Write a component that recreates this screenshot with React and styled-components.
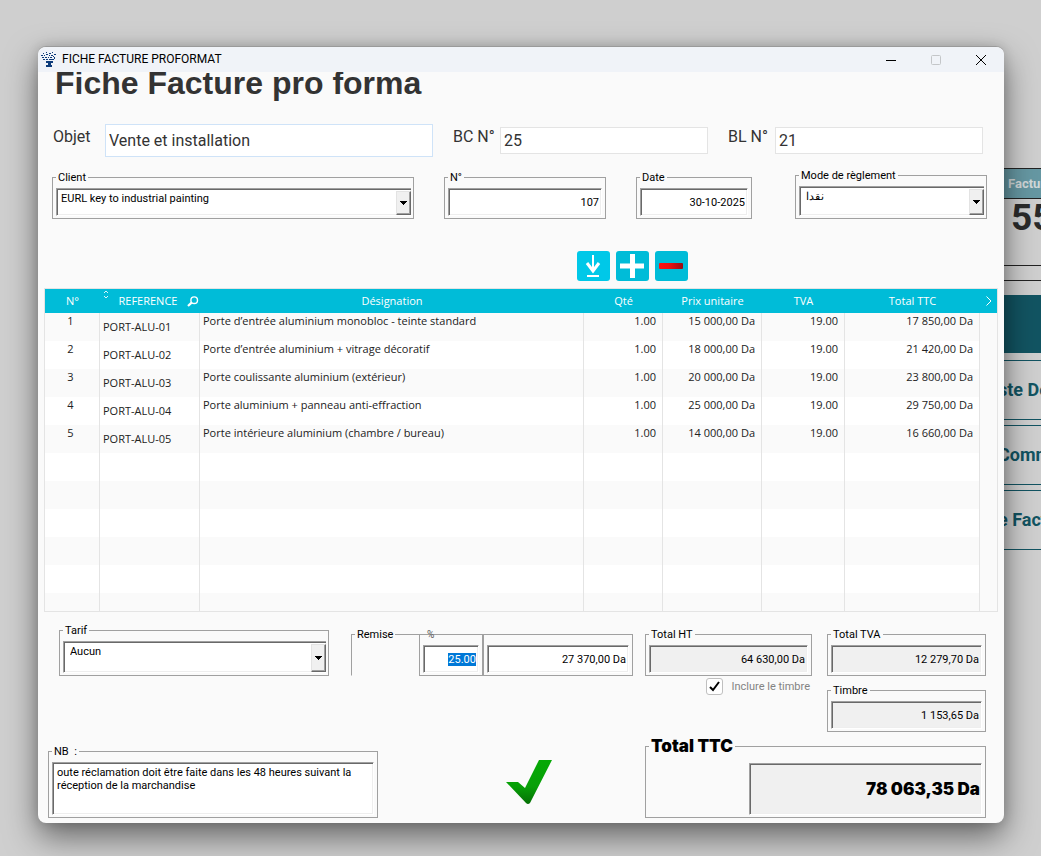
import React, { Component } from 'react';
import styled, { createGlobalStyle, ThemeProvider } from 'styled-components';

const theme = {
  surface: '#fafafa',
  accent: '#00bcd8',
  teal: '#125462',
  groove: '#a0a0a0',
  gridLine: '#e4e4e4',
  ui: 'Roboto, Arial, sans-serif',
  table: '"Open Sans", sans-serif',
};

const GlobalStyle = createGlobalStyle`
  * {
    box-sizing: border-box;
  }
  body {
    margin: 0;
    background: #cfcfcf;
  }
  button, input, select, textarea {
    border: 0;
    border-radius: 0;
    color: inherit;
    font: inherit;
    margin: 0;
    outline: none;
    padding: 0;
  }
`;

const Desktop = styled.div`
  align-items: flex-start;
  display: flex;
  font-family: ${props => props.theme.ui};
  font-size: 11px;
  line-height: 13px;
  min-height: 100vh;
  overflow: hidden;
  padding: 46px 0 32px 38px;
`;

const Window = styled.main`
  background: ${props => props.theme.surface};
  border-top: 1px solid #9a9a9a;
  border-radius: 8px;
  box-shadow: 0 14px 32px rgba(0, 0, 0, 0.5), 0 0 12px rgba(0, 0, 0, 0.15);
  color: #000;
  flex: 1;
  min-width: 0;
  overflow: hidden;
  padding: 0 1px 1px;
  position: relative;
  z-index: 1;
`;

const TitleBar = styled.header`
  align-items: center;
  background: #f0f3f8;
  display: flex;
  font-size: 12px;
  gap: 6px;
  height: 25px;
  margin: 0 -1px;
  padding: 0 1px 0 3px;
`;

const WindowTitle = styled.span`
  flex: 1;
`;

const WindowButtons = styled.div`
  display: flex;
`;

const WindowButton = styled.button`
  align-items: center;
  background: none;
  color: ${props => (props.disabled ? '#c4c6c9' : '#000')};
  display: flex;
  height: 25px;
  justify-content: center;
  width: 45px;
`;

const Body = styled.form`
  overflow: hidden;
`;

const Heading = styled.h1`
  color: #333;
  font-family: "Liberation Sans", Arial, sans-serif;
  font-size: 32px;
  line-height: 32px;
  margin: -5px 0 25px 16px;
`;

const HeadRow = styled.div`
  color: #333;
  display: flex;
  font-size: 16px;
  gap: 20px;
  padding: 0 20px 0 14px;
`;

const HeadField = styled.label`
  align-items: center;
  display: flex;
  flex: ${props => props.$grow} 1 0;
  height: 33px;
  min-width: 0;
`;

const HeadLabel = styled.span`
  align-self: flex-start;
  flex: none;
  line-height: 26px;
  width: ${props => props.$width};
`;

const HeadInput = styled.input`
  background: #fff;
  border: 1px solid ${props => (props.$tall ? '#cfe3f8' : '#e4e4e4')};
  flex: 1;
  height: ${props => (props.$tall ? '33px' : '27px')};
  min-width: 0;
  padding: 0 3px;
`;

const GroupRow = styled.div`
  align-items: flex-end;
  display: flex;
  gap: 43px;
  margin-top: 12px;
  padding: 0 16px 0 13px;
`;

const GroupSet = styled.div`
  display: flex;
  flex: 700 1 700px;
  gap: 30px;
`;

const Group = styled.fieldset`
  border: 1px solid ${props => props.theme.groove};
  flex: ${props => (props.$grow ? `${props.$grow} 1 ${props.$grow}px` : 'none')};
  margin: 0;
  min-width: 0;
  padding: 4px 3px 2px;
`;

const Legend = styled.legend`
  padding: 0 2px;
`;

const Bare = styled(Group)`
  padding-top: 10px;
  position: relative;
`;

const OverLegend = styled.legend`
  color: #555;
  font-size: 10px;
  left: 5px;
  position: absolute;
  top: -7px;
`;

const sunken = `
  border: 1px solid;
  border-color: #a0a0a0 #fff #fff #a0a0a0;
  box-shadow: inset 1px 1px 0 #696969, inset -1px -1px 0 #eee;
`;

const Sunken = styled.input`
  ${sunken}
  background: ${props => (props.readOnly ? '#f0f0f0' : '#fff')};
  display: block;
  height: 28px;
  padding: 0 2px;
  text-align: right;
  width: 100%;
  &::selection {
    background: #0078d7;
    color: #fff;
  }
`;

const ComboFrame = styled.div`
  ${sunken}
  background: #fff;
  border-right: 0;
  display: flex;
  height: ${props => props.$height || '28px'};
  margin-right: -1px;
  padding: 2px 0 0 1px;
`;

const ComboSelect = styled.select`
  appearance: none;
  background: none;
  flex: 1;
  height: 15px;
  min-width: 0;
  padding-left: ${props => (props.$inset ? '5px' : '3px')};
`;

const ComboArrow = styled.span`
  align-items: center;
  background: #f0f0f0;
  border: 1px solid;
  border-color: #e3e3e3 #696969 #696969 #e3e3e3;
  box-shadow: inset -1px -1px 0 #a0a0a0;
  display: flex;
  justify-content: center;
  pointer-events: none;
  width: 15px;
`;

const Toolbar = styled.div`
  display: flex;
  gap: 6px;
  margin: 32px 0 7px calc(50% + 56px);
`;

const ToolButton = styled.button`
  background: ${props => (props.$bright ? '#00c8e8' : props.theme.accent)};
  border-radius: 3px;
  height: 30px;
  width: 33px;
  svg {
    display: block;
  }
`;

const TableFrame = styled.div`
  border: 1px solid ${props => props.theme.gridLine};
  margin: 0 5px;
`;

const Table = styled.table`
  border-spacing: 0;
  color: #222;
  font-family: ${props => props.theme.table};
  line-height: 16px;
  table-layout: fixed;
  width: 100%;
`;

const HeadCell = styled.th`
  background: ${props => props.theme.accent};
  color: #fff;
  font-weight: normal;
  height: 24px;
  padding: 0;
  width: ${props => props.$width || 'auto'};
  svg {
    display: block;
    margin: 0 auto;
  }
`;

const SortableHead = styled.div`
  align-items: center;
  display: flex;
  height: 24px;
  justify-content: space-between;
  padding: 0 1px 0 3px;
  svg {
    margin: 0;
  }
  svg:first-child {
    align-self: flex-start;
  }
`;

const Row = styled.tr`
  background: #fff;
  height: 28px;
  &:nth-child(odd) {
    background: ${props => props.theme.surface};
  }
  &:last-child {
    height: 18px;
  }
`;

const Cell = styled.td`
  border-right: 1px solid ${props => props.theme.gridLine};
  overflow: hidden;
  padding: ${props => (props.$low ? '6px' : '0')} 6px 0 3px;
  text-align: ${props => props.$align || 'left'};
  vertical-align: top;
  white-space: nowrap;
  &:last-child {
    background: ${props => props.theme.surface};
    border-right: 0;
  }
`;

const Footer = styled.div`
  display: grid;
  gap: 12px;
  grid-template-columns: 585fr 341fr;
  margin-top: 12px;
  padding: 0 17px 4px 9px;
`;

const FooterLeft = styled.div`
  display: flex;
  flex-direction: column;
  justify-content: space-between;
  min-width: 0;
`;

const TariffRow = styled.div`
  align-items: flex-end;
  display: flex;
  gap: 22px;
  padding-left: 11px;
`;

const Discount = styled.div`
  align-items: flex-end;
  display: flex;
  flex: 282 1 282px;
`;

const DiscountLabel = styled(Group)`
  border-bottom-color: transparent;
  border-right: 0;
  height: 48px;
`;

const NoteRow = styled.div`
  align-items: center;
  display: flex;
`;

const Note = styled.textarea`
  ${sunken}
  background: #fff;
  display: block;
  height: 53px;
  padding: 3px 4px;
  resize: none;
  width: 100%;
`;

const Confirm = styled.div`
  display: flex;
  flex: 255 1 255px;
  justify-content: center;
  padding-left: 46px;
`;

const ConfirmButton = styled.button`
  background: none;
  svg {
    display: block;
  }
`;

const FooterRight = styled.div`
  min-width: 0;
  padding-top: 4px;
`;

const Totals = styled.div`
  display: grid;
  gap: 15px;
  grid-template-columns: 167fr 159fr;
  margin-bottom: 6px;
`;

const TotalsColumn = styled.div`
  display: flex;
  flex-direction: column;
  gap: ${props => props.$gap};
  min-width: 0;
`;

const StampOption = styled.label`
  align-items: center;
  color: #838383;
  display: flex;
  gap: 8px;
  justify-content: flex-end;
  padding-right: 2px;
`;

const CheckBox = styled.span`
  background: #fff;
  border: 1px solid #c0c0c0;
  border-radius: 3px;
  display: grid;
  height: 17px;
  width: 17px;
  > * {
    grid-area: 1 / 1;
  }
  input {
    appearance: none;
  }
  svg {
    pointer-events: none;
    visibility: hidden;
  }
  input:checked + svg {
    visibility: visible;
  }
`;

const GrandTotal = styled(Group)`
  font-family: Inter, sans-serif;
  font-size: 17px;
  font-weight: 900;
  line-height: 16px;
  padding-top: 9px;
`;

const GrandInput = styled(Sunken)`
  height: 52px;
  margin-left: auto;
  padding: 0 1px;
  width: 70%;
`;

// page left open behind the window, only its edge shows on the right
const Backdrop = styled.aside`
  color: ${props => props.theme.teal};
  flex: none;
  margin: 122px -63px 0 -60px;
  width: 160px;
`;

const Counter = styled.section`
  border: 1px solid #222;
  height: 98px;
  margin-bottom: 14px;
`;

const CounterTitle = styled.h2`
  background: #6698a3;
  border-bottom: 1px solid #222;
  color: #d2d9da;
  font-size: 13px;
  line-height: 29px;
  margin: 0;
  padding-left: 63px;
`;

const CounterValue = styled.div`
  color: #2a2a2a;
  font-size: 37px;
  font-weight: bold;
  line-height: 38px;
  padding-left: 66px;
`;

const Menu = styled.nav`
  border-top: 1px solid #222;
  display: flex;
  flex-direction: column;
  gap: 5px;
  padding-top: 14px;
`;

const MenuBanner = styled.div`
  background: ${props => props.theme.teal};
  height: 58px;
  margin-bottom: 2px;
`;

const MenuButton = styled.button`
  background: #cfcfcf;
  border: 1px solid ${props => props.theme.teal};
  font-size: 18px;
  font-weight: bold;
  height: 60px;
  padding: 0 0 2px 53px;
  text-align: left;
`;

const AppIcon = () => (
  <svg width="15" height="16" viewBox="0 0 15 16" fill="#0d3b7a" shapeRendering="crispEdges" aria-hidden="true">
    <path d="M2 1h1v1H2zM5 0h1v1H5zM8 1h2v1H8zM11 0h1v1h-1zM13 2h2v1h-2zM0 3h2v1H0zM3 3h1v1H3zM5 2h2v1H5zM8 3h1v1H8zM10 3h2v1h-2zM1 5h2v1H1zM4 5h2v1H4zM7 5h1v1H7zM9 5h2v1H9zM12 4h1v1h-1zM13 5h1v2h-1zM2 7h2v1H2zM5 7h2v1H5zM11 7h2v1h-2z" />
    <path d="M8 7h3v1H8zM5 9h7v2H5zM7 11h3v2H7zM5 13h6v2H5z" />
  </svg>
);

const Caret = () => (
  <svg width="7" height="4" viewBox="0 0 7 4" shapeRendering="crispEdges" aria-hidden="true">
    <path d="M0 0h7v1H6v1H5v1H4v1H3V3H2V2H1V1H0z" />
  </svg>
);

const Search = () => (
  <svg width="12" height="11" viewBox="0 0 12 11" fill="none" stroke="#fff" aria-hidden="true">
    <circle cx="7.2" cy="4.2" r="3.3" strokeWidth="1.4" />
    <path d="M4.6 6.6 1 10" strokeWidth="2.2" />
  </svg>
);

const Sort = () => (
  <svg width="6" height="10" viewBox="0 0 6 10" fill="none" stroke="#d8f6fa" aria-hidden="true">
    <path d="M1 4 3 2l2 2M1 7l2 2 2-2" />
  </svg>
);

const Combo = ({ id, value, inset, height }) => (
  <ComboFrame $height={height}>
    <ComboSelect id={id} defaultValue={value} $inset={inset}>
      <option>{value}</option>
    </ComboSelect>
    <ComboArrow><Caret /></ComboArrow>
  </ComboFrame>
);

const Amount = ({ id, label, value, grow, readOnly }) => (
  <Group $grow={grow}>
    <Legend><label htmlFor={id}>{label}</label></Legend>
    <Sunken id={id} defaultValue={value} readOnly={readOnly} />
  </Group>
);

const lines = [
  { id: 1, reference: 'PORT-ALU-01', name: 'Porte d’entrée aluminium monobloc - teinte standard', price: '15 000,00 Da', total: '17 850,00 Da' },
  { id: 2, reference: 'PORT-ALU-02', name: 'Porte d’entrée aluminium + vitrage décoratif', price: '18 000,00 Da', total: '21 420,00 Da' },
  { id: 3, reference: 'PORT-ALU-03', name: 'Porte coulissante aluminium (extérieur)', price: '20 000,00 Da', total: '23 800,00 Da' },
  { id: 4, reference: 'PORT-ALU-04', name: 'Porte aluminium + panneau anti-effraction', price: '25 000,00 Da', total: '29 750,00 Da' },
  { id: 5, reference: 'PORT-ALU-05', name: 'Porte intérieure aluminium (chambre / bureau)', price: '14 000,00 Da', total: '16 660,00 Da' },
];
const emptyRows = [6, 7, 8, 9, 10, 11];

class InvoiceForm extends Component {
  percent = React.createRef();

  componentDidMount() {
    this.percent.current.focus();
    this.percent.current.select();
  }

  renderTable() {
    return (
      <TableFrame>
        <Table>
          <thead>
            <tr>
              <HeadCell $width="55px">N°</HeadCell>
              <HeadCell $width="100px">
                <SortableHead><Sort />REFERENCE<Search /></SortableHead>
              </HeadCell>
              <HeadCell>Désignation</HeadCell>
              <HeadCell $width="79px">Qté</HeadCell>
              <HeadCell $width="99px">Prix unitaire</HeadCell>
              <HeadCell $width="83px">TVA</HeadCell>
              <HeadCell $width="135px">Total TTC</HeadCell>
              <HeadCell $width="17px">
                <svg width="6" height="10" viewBox="0 0 6 10" fill="none" stroke="#fff" aria-hidden="true">
                  <path d="M.5.5 5 5 .5 9.5" />
                </svg>
              </HeadCell>
            </tr>
          </thead>
          <tbody>
            {lines.map(({ id, reference, name, price, total }) => (
              <Row key={id}>
                <Cell $align="center">{id}</Cell>
                <Cell $low>{reference}</Cell>
                <Cell>{name}</Cell>
                <Cell $align="right">1.00</Cell>
                <Cell $align="right">{price}</Cell>
                <Cell $align="right">19.00</Cell>
                <Cell $align="right">{total}</Cell>
                <Cell />
              </Row>
            ))}
            {emptyRows.map(id => (
              <Row key={id}>
                <Cell /><Cell /><Cell /><Cell /><Cell /><Cell /><Cell /><Cell />
              </Row>
            ))}
          </tbody>
        </Table>
      </TableFrame>
    );
  }

  renderFooter() {
    return (
      <Footer>
        <FooterLeft>
          <TariffRow>
            <Group $grow={270}>
              <Legend><label htmlFor="tarif">Tarif</label></Legend>
              <Combo id="tarif" value="Aucun" inset height="32px" />
            </Group>
            <Discount>
              <DiscountLabel $grow={68}>
                <Legend>Remise</Legend>
              </DiscountLabel>
              <Bare $grow={64}>
                <OverLegend><label htmlFor="percent">%</label></OverLegend>
                <Sunken id="percent" ref={this.percent} defaultValue="25.00" />
              </Bare>
              <Bare $grow={150}>
                <Sunken aria-label="Remise" defaultValue="27 370,00 Da" />
              </Bare>
            </Discount>
          </TariffRow>
          <NoteRow>
            <Group $grow={330}>
              <Legend><label htmlFor="note">NB &nbsp;:</label></Legend>
              <Note
                id="note"
                defaultValue="oute réclamation doit être faite dans les 48 heures suivant la réception de la marchandise"
              />
            </Group>
            <Confirm>
              <ConfirmButton type="button" aria-label="Valider">
                <svg width="46" height="44" viewBox="0 0 46 44">
                  <defs>
                    <linearGradient id="tick" x1="0" y1="0" x2="0" y2="1">
                      <stop offset="0" stopColor="#06a906" />
                      <stop offset=".6" stopColor="#07a007" />
                      <stop offset="1" stopColor="#056f05" />
                    </linearGradient>
                  </defs>
                  <path d="M0 22h12l7 6L33 0h13L24 43q-2 2-4 0z" fill="url(#tick)" />
                </svg>
              </ConfirmButton>
            </Confirm>
          </NoteRow>
        </FooterLeft>
        <FooterRight>
          <Totals>
            <TotalsColumn $gap="2px">
              <Amount id="ht" label="Total HT" value="64 630,00 Da" readOnly />
              <StampOption>
                <CheckBox>
                  <input type="checkbox" defaultChecked />
                  <svg width="15" height="15" viewBox="0 0 15 15" fill="none" stroke="#000" strokeWidth="2">
                    <path d="m3 8 3 3 6-8" />
                  </svg>
                </CheckBox>
                Inclure le timbre
              </StampOption>
            </TotalsColumn>
            <TotalsColumn $gap="8px">
              <Amount id="tva" label="Total TVA" value="12 279,70 Da" readOnly />
              <Amount id="timbre" label="Timbre" value="1 153,65 Da" readOnly />
            </TotalsColumn>
          </Totals>
          <GrandTotal>
            <Legend><label htmlFor="ttc">Total TTC</label></Legend>
            <GrandInput id="ttc" defaultValue="78 063,35 Da" readOnly />
          </GrandTotal>
        </FooterRight>
      </Footer>
    );
  }

  render() {
    return (
      <Body>
        <Heading>Fiche Facture pro forma</Heading>
        <HeadRow>
          <HeadField $grow={380}>
            <HeadLabel $width="52px">Objet</HeadLabel>
            <HeadInput $tall defaultValue="Vente et installation" />
          </HeadField>
          <HeadField $grow={255}>
            <HeadLabel $width="47px">BC N°</HeadLabel>
            <HeadInput defaultValue="25" />
          </HeadField>
          <HeadField $grow={255}>
            <HeadLabel $width="47px">BL N°</HeadLabel>
            <HeadInput defaultValue="21" />
          </HeadField>
        </HeadRow>
        <GroupRow>
          <GroupSet>
            <Group $grow={362}>
              <Legend><label htmlFor="client">Client</label></Legend>
              <Combo id="client" value="EURL key to industrial painting" />
            </Group>
            <Amount id="number" label="N°" value="107" grow={162} />
            <Amount id="date" label="Date" value="30-10-2025" grow={116} />
          </GroupSet>
          <Group $grow={192}>
            <Legend><label htmlFor="payment">Mode de règlement</label></Legend>
            <Combo id="payment" value="نقدا" inset height="30px" />
          </Group>
        </GroupRow>
        <Toolbar>
          <ToolButton $bright type="button" aria-label="Importer">
            <svg width="33" height="30" viewBox="0 0 33 30" fill="none" stroke="#fff" strokeWidth="2">
              <path d="M16 4v16" />
              <path d="m10 12 6 8 6-8" strokeWidth="3" />
              <path d="M10 25h12" />
            </svg>
          </ToolButton>
          <ToolButton type="button" aria-label="Ajouter">
            <svg width="33" height="30" viewBox="0 0 33 30" fill="none" stroke="#fff" strokeWidth="5">
              <path d="M16.500 3v24M4 15h24" />
            </svg>
          </ToolButton>
          <ToolButton type="button" aria-label="Supprimer">
            <svg width="33" height="30" viewBox="0 0 33 30">
              <defs>
                <linearGradient id="minus">
                  <stop offset="0" stopColor="#f11" />
                  <stop offset=".4" stopColor="#f01010" />
                  <stop offset="1" stopColor="#980c14" />
                </linearGradient>
              </defs>
              <rect x="4" y="12" width="24" height="6" rx="1" fill="url(#minus)" />
            </svg>
          </ToolButton>
        </Toolbar>
        {this.renderTable()}
        {this.renderFooter()}
      </Body>
    );
  }
}

const App = () => (
  <ThemeProvider theme={theme}>
    <GlobalStyle />
    <Desktop>
      <Window>
        <TitleBar>
          <AppIcon />
          <WindowTitle>FICHE FACTURE PROFORMAT</WindowTitle>
          <WindowButtons>
            <WindowButton type="button" aria-label="Réduire">
              <svg width="10" height="10" stroke="currentColor"><path d="M0 5.500h10" /></svg>
            </WindowButton>
            <WindowButton type="button" aria-label="Agrandir" disabled>
              <svg width="10" height="10" fill="none" stroke="currentColor"><rect x=".5" y=".5" width="9" height="9" rx="1" /></svg>
            </WindowButton>
            <WindowButton type="button" aria-label="Fermer">
              <svg width="10" height="10" stroke="currentColor"><path d="m0 0 10 10M10 0 0 10" /></svg>
            </WindowButton>
          </WindowButtons>
        </TitleBar>
        <InvoiceForm />
      </Window>
      <Backdrop>
        <Counter>
          <CounterTitle>Facture</CounterTitle>
          <CounterValue>55</CounterValue>
        </Counter>
        <Menu>
          <MenuBanner />
          <MenuButton type="button">ste De</MenuButton>
          <MenuButton type="button">Comm</MenuButton>
          <MenuButton type="button">e Fact</MenuButton>
        </Menu>
      </Backdrop>
    </Desktop>
  </ThemeProvider>
);

export default App;
